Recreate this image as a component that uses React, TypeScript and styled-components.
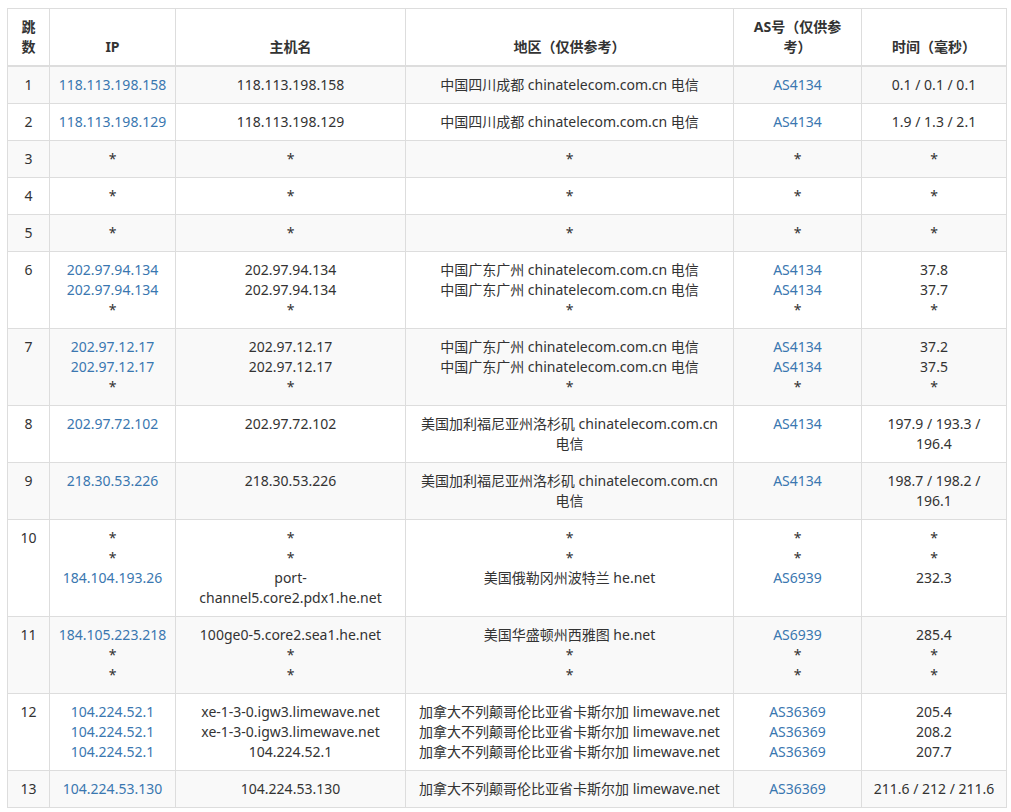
import styled, { createGlobalStyle } from 'styled-components'

const Global = createGlobalStyle`
  body {
    margin: 0;
    background: #fff;
    font-family: "Noto Sans", "Noto Sans CJK SC", sans-serif;
    font-size: 14px;
    color: #333;
  }
`

const Page = styled.div`
  padding: 8px 5px 0 7px;
`

const Table = styled.table`
  width: 999px;
  border-collapse: collapse;
  table-layout: fixed;
  line-height: 20px;
`

const Th = styled.th`
  border: 1px solid #ddd;
  border-bottom: 2px solid #ddd;
  padding: 8px;
  text-align: center;
  vertical-align: bottom;
  font-weight: bold;
`

const Row = styled.tr<{ $odd: boolean }>`
  background: ${({ $odd }) => ($odd ? '#f9f9f9' : '#fff')};
`

const Td = styled.td`
  border: 1px solid #ddd;
  padding: 8px;
  text-align: center;
  vertical-align: top;
  word-wrap: break-word;
`

const Link = styled.span`
  color: #3a77b0;
  display: block;
`

const Line = styled.span`
  display: block;
`

type Hop = { ip: string[]; host: string[]; geo: string[]; as: string[]; time: string[] }

const s = ['*']
const hops: Hop[] = [
  { ip: ['118.113.198.158'], host: ['118.113.198.158'], geo: ['中国四川成都 chinatelecom.com.cn 电信'], as: ['AS4134'], time: ['0.1 / 0.1 / 0.1'] },
  { ip: ['118.113.198.129'], host: ['118.113.198.129'], geo: ['中国四川成都 chinatelecom.com.cn 电信'], as: ['AS4134'], time: ['1.9 / 1.3 / 2.1'] },
  { ip: s, host: s, geo: s, as: s, time: s },
  { ip: s, host: s, geo: s, as: s, time: s },
  { ip: s, host: s, geo: s, as: s, time: s },
  { ip: ['202.97.94.134', '202.97.94.134', '*'], host: ['202.97.94.134', '202.97.94.134', '*'], geo: ['中国广东广州 chinatelecom.com.cn 电信', '中国广东广州 chinatelecom.com.cn 电信', '*'], as: ['AS4134', 'AS4134', '*'], time: ['37.8', '37.7', '*'] },
  { ip: ['202.97.12.17', '202.97.12.17', '*'], host: ['202.97.12.17', '202.97.12.17', '*'], geo: ['中国广东广州 chinatelecom.com.cn 电信', '中国广东广州 chinatelecom.com.cn 电信', '*'], as: ['AS4134', 'AS4134', '*'], time: ['37.2', '37.5', '*'] },
  { ip: ['202.97.72.102'], host: ['202.97.72.102'], geo: ['美国加利福尼亚州洛杉矶 chinatelecom.com.cn 电信'], as: ['AS4134'], time: ['197.9 / 193.3 / 196.4'] },
  { ip: ['218.30.53.226'], host: ['218.30.53.226'], geo: ['美国加利福尼亚州洛杉矶 chinatelecom.com.cn 电信'], as: ['AS4134'], time: ['198.7 / 198.2 / 196.1'] },
  { ip: ['*', '*', '184.104.193.26'], host: ['*', '*', 'port-channel5.core2.pdx1.he.net'], geo: ['*', '*', '美国俄勒冈州波特兰 he.net'], as: ['*', '*', 'AS6939'], time: ['*', '*', '232.3'] },
  { ip: ['184.105.223.218', '*', '*'], host: ['100ge0-5.core2.sea1.he.net', '*', '*'], geo: ['美国华盛顿州西雅图 he.net', '*', '*'], as: ['AS6939', '*', '*'], time: ['285.4', '*', '*'] },
  { ip: ['104.224.52.1', '104.224.52.1', '104.224.52.1'], host: ['xe-1-3-0.igw3.limewave.net', 'xe-1-3-0.igw3.limewave.net', '104.224.52.1'], geo: ['加拿大不列颠哥伦比亚省卡斯尔加 limewave.net', '加拿大不列颠哥伦比亚省卡斯尔加 limewave.net', '加拿大不列颠哥伦比亚省卡斯尔加 limewave.net'], as: ['AS36369', 'AS36369', 'AS36369'], time: ['205.4', '208.2', '207.7'] },
  { ip: ['104.224.53.130'], host: ['104.224.53.130'], geo: ['加拿大不列颠哥伦比亚省卡斯尔加 limewave.net'], as: ['AS36369'], time: ['211.6 / 212 / 211.6'] },
]

const links = (items: string[]) =>
  items.map((v, i) => (v === '*' ? <Line key={i}>*</Line> : <Link key={i}>{v}</Link>))
const lines = (items: string[]) => items.map((v, i) => <Line key={i}>{v}</Line>)

export default function App() {
  return (
    <Page>
      <Global />
      <Table>
        <colgroup>
          <col style={{ width: 42 }} />
          <col style={{ width: 126 }} />
          <col style={{ width: 230 }} />
          <col style={{ width: 328 }} />
          <col style={{ width: 128 }} />
          <col style={{ width: 145 }} />
        </colgroup>
        <thead>
          <tr>
            <Th>跳数</Th>
            <Th>IP</Th>
            <Th>主机名</Th>
            <Th>地区（仅供参考）</Th>
            <Th>AS号（仅供参<br />考）</Th>
            <Th>时间（毫秒）</Th>
          </tr>
        </thead>
        <tbody>
          {hops.map((h, i) => (
            <Row key={i} $odd={i % 2 === 0}>
              <Td>{i + 1}</Td>
              <Td>{links(h.ip)}</Td>
              <Td>{lines(h.host)}</Td>
              <Td>{lines(h.geo)}</Td>
              <Td>{links(h.as)}</Td>
              <Td>{lines(h.time)}</Td>
            </Row>
          ))}
        </tbody>
      </Table>
    </Page>
  )
}
